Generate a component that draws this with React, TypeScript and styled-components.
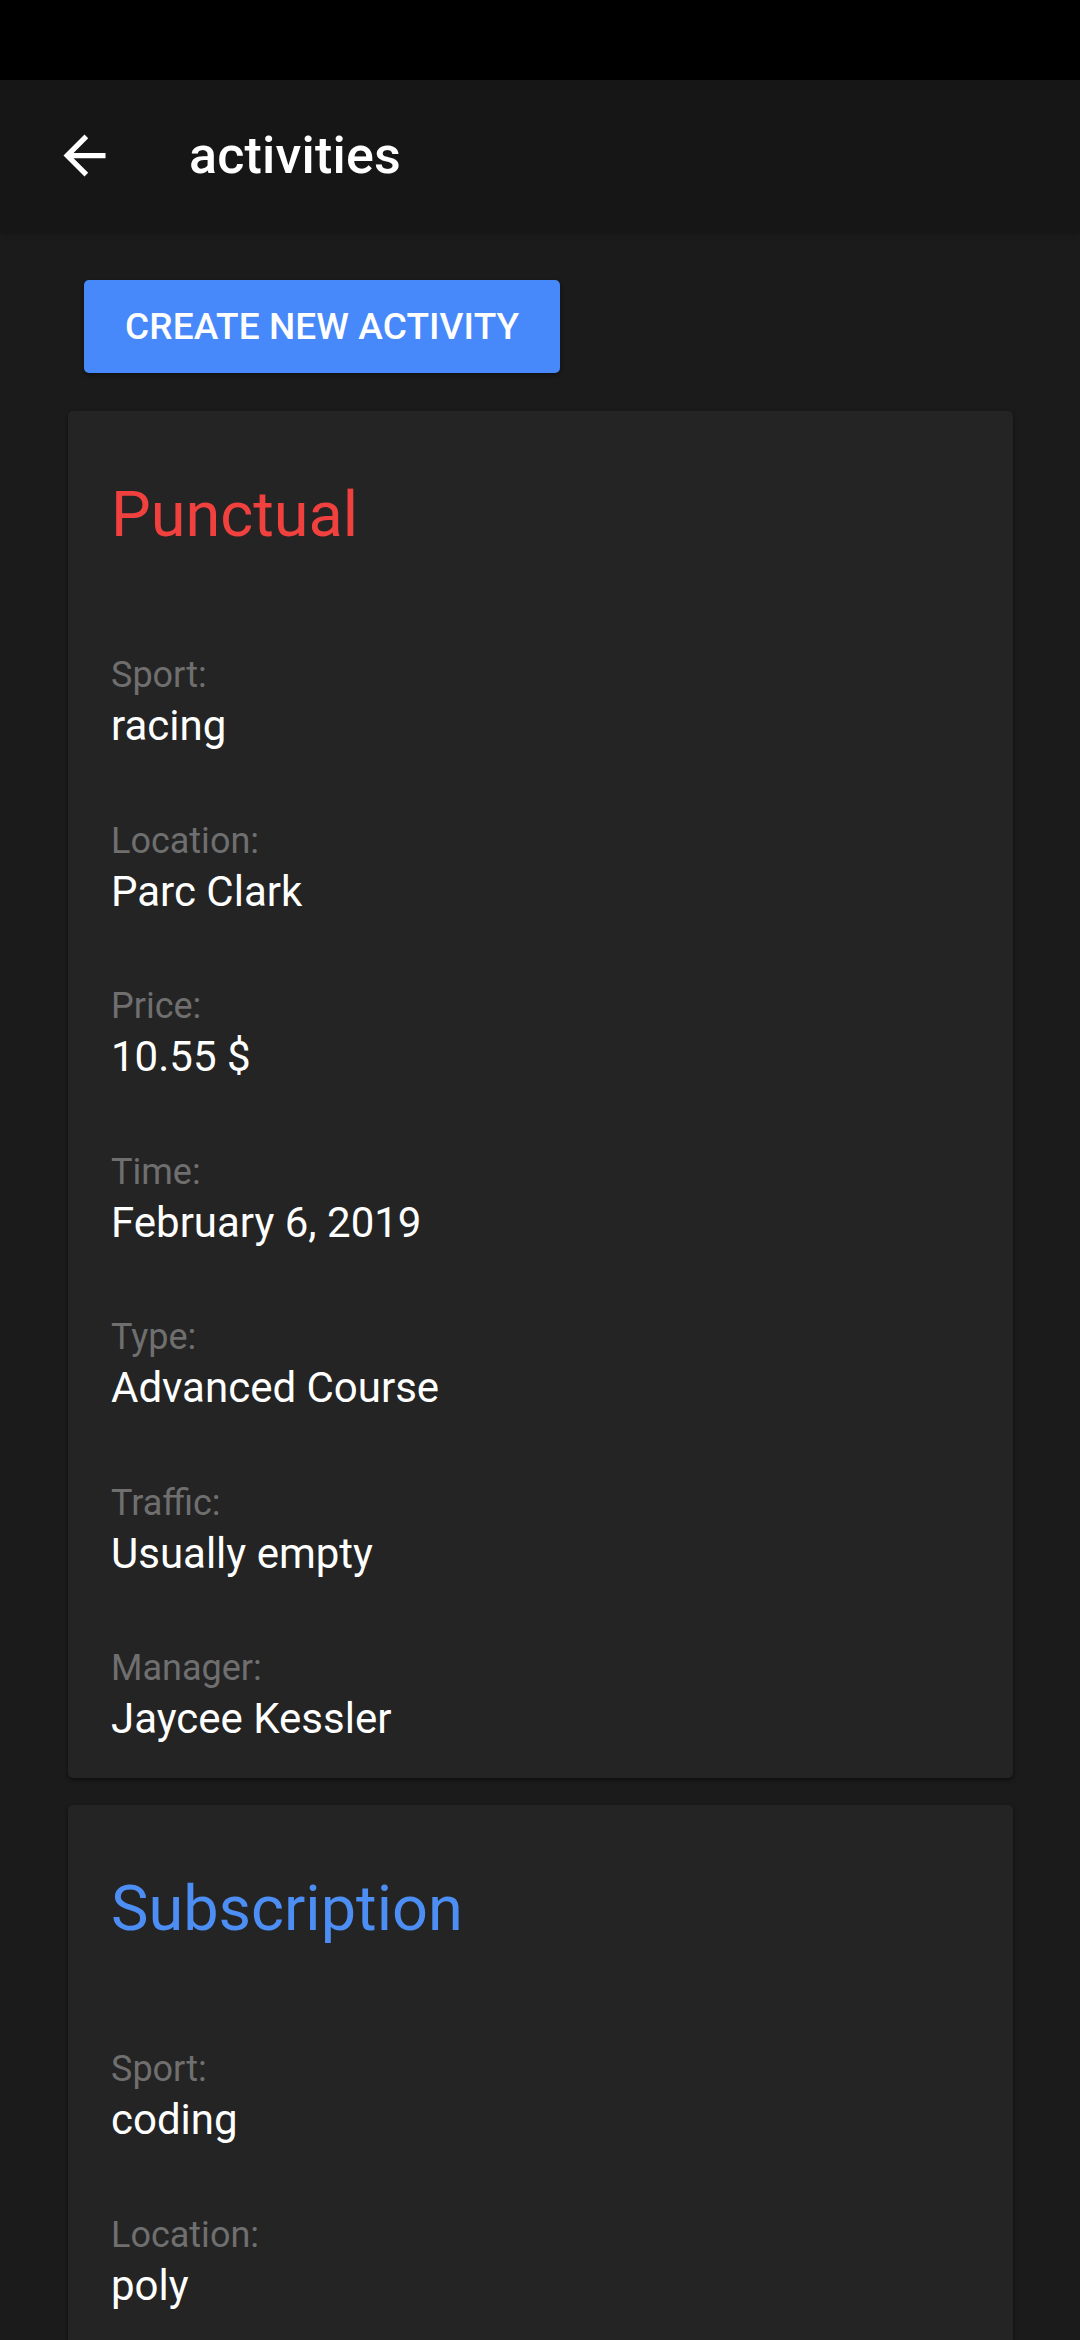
import React from 'react';
import styled, { createGlobalStyle } from 'styled-components';

const GlobalStyle = createGlobalStyle`
  html, body {
    margin: 0;
    padding: 0;
    background: #1b1b1b;
    font-family: Roboto, "Noto Sans", sans-serif;
    -webkit-font-smoothing: antialiased;
  }
`;

type Field = { label: string; value: string };
type Activity = { kind: string; tone: 'red' | 'blue'; fields: Field[] };

const activities: Activity[] = [
  {
    kind: 'Punctual',
    tone: 'red',
    fields: [
      { label: 'Sport:', value: 'racing' },
      { label: 'Location:', value: 'Parc Clark' },
      { label: 'Price:', value: '10.55 $' },
      { label: 'Time:', value: 'February 6, 2019' },
      { label: 'Type:', value: 'Advanced Course' },
      { label: 'Traffic:', value: 'Usually empty' },
      { label: 'Manager:', value: 'Jaycee Kessler' },
    ],
  },
  {
    kind: 'Subscription',
    tone: 'blue',
    fields: [
      { label: 'Sport:', value: 'coding' },
      { label: 'Location:', value: 'poly' },
    ],
  },
];

function App() {
  return (
    <Screen>
      <GlobalStyle />
      <StatusBar />
      <AppBar>
        <BackButton aria-label='back'>
          <svg viewBox='0 0 24 24' width='63' height='63'>
            <path fill='#fff' d='M20 11H7.83l5.59-5.59L12 4l-8 8 8 8 1.41-1.41L7.83 13H20v-2z' />
          </svg>
        </BackButton>
        <Title>activities</Title>
      </AppBar>
      <Content>
        <CreateButton>Create new activity</CreateButton>
        {activities.map((a) => (
          <Card key={a.kind}>
            <Kind $tone={a.tone}>{a.kind}</Kind>
            <Fields>
              {a.fields.map((f) => (
                <FieldGroup key={f.label}>
                  <Label>{f.label}</Label>
                  <Value>{f.value}</Value>
                </FieldGroup>
              ))}
            </Fields>
          </Card>
        ))}
      </Content>
    </Screen>
  );
}

const Screen = styled.div`
  height: 2340px;
  background: #1b1b1b;
  overflow: hidden;
`;

const StatusBar = styled.div`
  height: 80px;
  background: #000;
`;

const AppBar = styled.header`
  height: 151px;
  background: #161616;
  display: flex;
  align-items: center;
  padding-left: 53px;
  box-shadow: 0 2px 6px rgba(0, 0, 0, 0.3);
`;

const BackButton = styled.div`
  width: 63px;
  height: 63px;
  display: flex;
  svg { display: block; }
`;

const Title = styled.h1`
  margin: 0 0 0 73px;
  font-size: 52px;
  font-weight: 500;
  color: #fff;
  letter-spacing: 0.2px;
`;

const Content = styled.main`
  padding: 49px 67px 0 68px;
  display: flex;
  flex-direction: column;
`;

const CreateButton = styled.button`
  align-self: flex-start;
  margin: 0 0 38px 16px;
  height: 93px;
  padding: 0 41px;
  border: none;
  border-radius: 5px;
  background: #4789fb;
  color: #fff;
  font-family: Roboto, sans-serif;
  font-size: 37px;
  font-weight: 500;
  letter-spacing: 0.1px;
  text-transform: uppercase;
  box-shadow: 0 2px 4px rgba(0, 0, 0, 0.4);
`;

const Card = styled.section`
  background: #242424;
  border-radius: 5px;
  padding: 66px 44px 31px 43px;
  margin-bottom: 27px;
  box-shadow: 0 2px 4px rgba(0, 0, 0, 0.5);
`;

const Kind = styled.h2<{ $tone: 'red' | 'blue' }>`
  margin: 0 0 100px;
  font-size: 63px;
  line-height: 76px;
  font-weight: 400;
  color: ${(p) => (p.$tone === 'red' ? '#f0413f' : '#4d8ef5')};
`;

const Fields = styled.div`
  display: flex;
  flex-direction: column;
  gap: 64.5px;
`;

const FieldGroup = styled.div`
  display: flex;
  flex-direction: column;
`;

const Label = styled.span`
  font-size: 36px;
  line-height: 45px;
  color: #6f6f6f;
`;

const Value = styled.span`
  font-size: 42px;
  line-height: 56px;
  color: #fff;
`;

export default App;
